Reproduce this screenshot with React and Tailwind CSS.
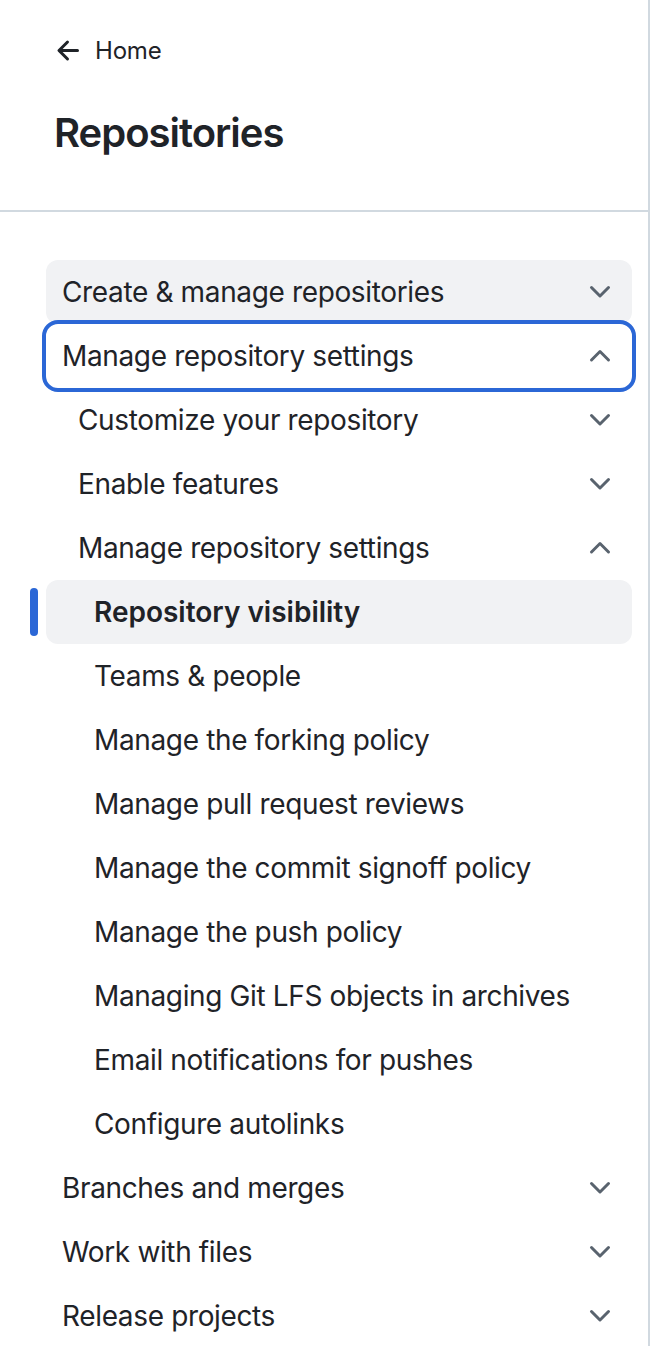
import React from "react";

const ChevronDown = () => (
  <svg width="32" height="32" viewBox="0 0 16 16" fill="#59636e" aria-hidden="true">
    <path d="M12.78 5.22a.749.749 0 0 1 0 1.06l-4.25 4.25a.749.749 0 0 1-1.06 0L3.22 6.28a.749.749 0 1 1 1.06-1.06L8 8.939l3.72-3.719a.749.749 0 0 1 1.06 0Z" />
  </svg>
);

const ChevronUp = () => (
  <svg width="32" height="32" viewBox="0 0 16 16" fill="#59636e" aria-hidden="true">
    <path d="M3.22 10.53a.749.749 0 0 1 0-1.06l4.25-4.25a.749.749 0 0 1 1.06 0l4.25 4.25a.749.749 0 1 1-1.06 1.06L8 6.811 4.28 10.53a.749.749 0 0 1-1.06 0Z" />
  </svg>
);

const ArrowLeft = () => (
  <svg width="32" height="32" viewBox="0 0 16 16" fill="#1f2328" aria-hidden="true">
    <path d="M7.78 12.53a.75.75 0 0 1-1.06 0L2.47 8.28a.75.75 0 0 1 0-1.06l4.25-4.25a.751.751 0 0 1 1.042.018.751.751 0 0 1 .018 1.042L4.81 7h7.44a.75.75 0 0 1 0 1.5H4.81l2.97 2.97a.75.75 0 0 1 0 1.06Z" />
  </svg>
);

const items = [
  { label: "Create & manage repositories", level: 1, icon: "down", bg: true },
  { label: "Manage repository settings", level: 1, icon: "up", focus: true },
  { label: "Customize your repository", level: 2, icon: "down" },
  { label: "Enable features", level: 2, icon: "down" },
  { label: "Manage repository settings", level: 2, icon: "up" },
  { label: "Repository visibility", level: 3, active: true },
  { label: "Teams & people", level: 3 },
  { label: "Manage the forking policy", level: 3 },
  { label: "Manage pull request reviews", level: 3 },
  { label: "Manage the commit signoff policy", level: 3 },
  { label: "Manage the push policy", level: 3 },
  { label: "Managing Git LFS objects in archives", level: 3 },
  { label: "Email notifications for pushes", level: 3 },
  { label: "Configure autolinks", level: 3 },
  { label: "Branches and merges", level: 1, icon: "down" },
  { label: "Work with files", level: 1, icon: "down" },
  { label: "Release projects", level: 1, icon: "down" },
];

const padByLevel = { 1: "pl-[16px]", 2: "pl-[32px]", 3: "pl-[48px]" };

export default function App() {
  return (
    <div
      className="w-[650px] min-h-screen border-r-2 border-[#d1d9e0] bg-white text-[#1f2328] overflow-hidden"
      style={{ fontFamily: "Inter, 'Liberation Sans', sans-serif" }}
    >
      <div className="pt-[35px] pb-[53px] pl-[53px] border-b-2 border-[#d1d9e0]">
        <div className="flex items-center h-[32px] gap-[10px]">
          <ArrowLeft />
          <span className="text-[24px] leading-[32px] tracking-[-0.2px]">Home</span>
        </div>
        <h1 className="mt-[42px] text-[40px] leading-[48px] font-semibold pl-[1px] tracking-[-1px]">Repositories</h1>
      </div>
      <ul className="pt-[48px] pl-[46px] pr-[16px]">
        {items.map((it, i) => (
          <li
            key={i}
            className={
              "relative flex items-center justify-between h-[64px] rounded-[12px] pr-[16px] " +
              padByLevel[it.level] +
              (it.bg || it.active ? " bg-[#f1f2f4]" : "") +
              (it.focus ? " outline-[4px] outline-solid outline-[#2b67d6] z-10" : "")
            }
          >
            {it.active && (
              <span className="absolute left-[-16px] top-[8px] bottom-[8px] w-[8px] rounded-full bg-[#2b67d6]" />
            )}
            <span
              className={
                "text-[28px] leading-[40px] whitespace-nowrap" +
                (it.active ? " font-semibold tracking-[0px]" : " tracking-[-0.36px]")
              }
            >
              {it.label}
            </span>
            {it.icon === "down" && <ChevronDown />}
            {it.icon === "up" && <ChevronUp />}
          </li>
        ))}
      </ul>
    </div>
  );
}
